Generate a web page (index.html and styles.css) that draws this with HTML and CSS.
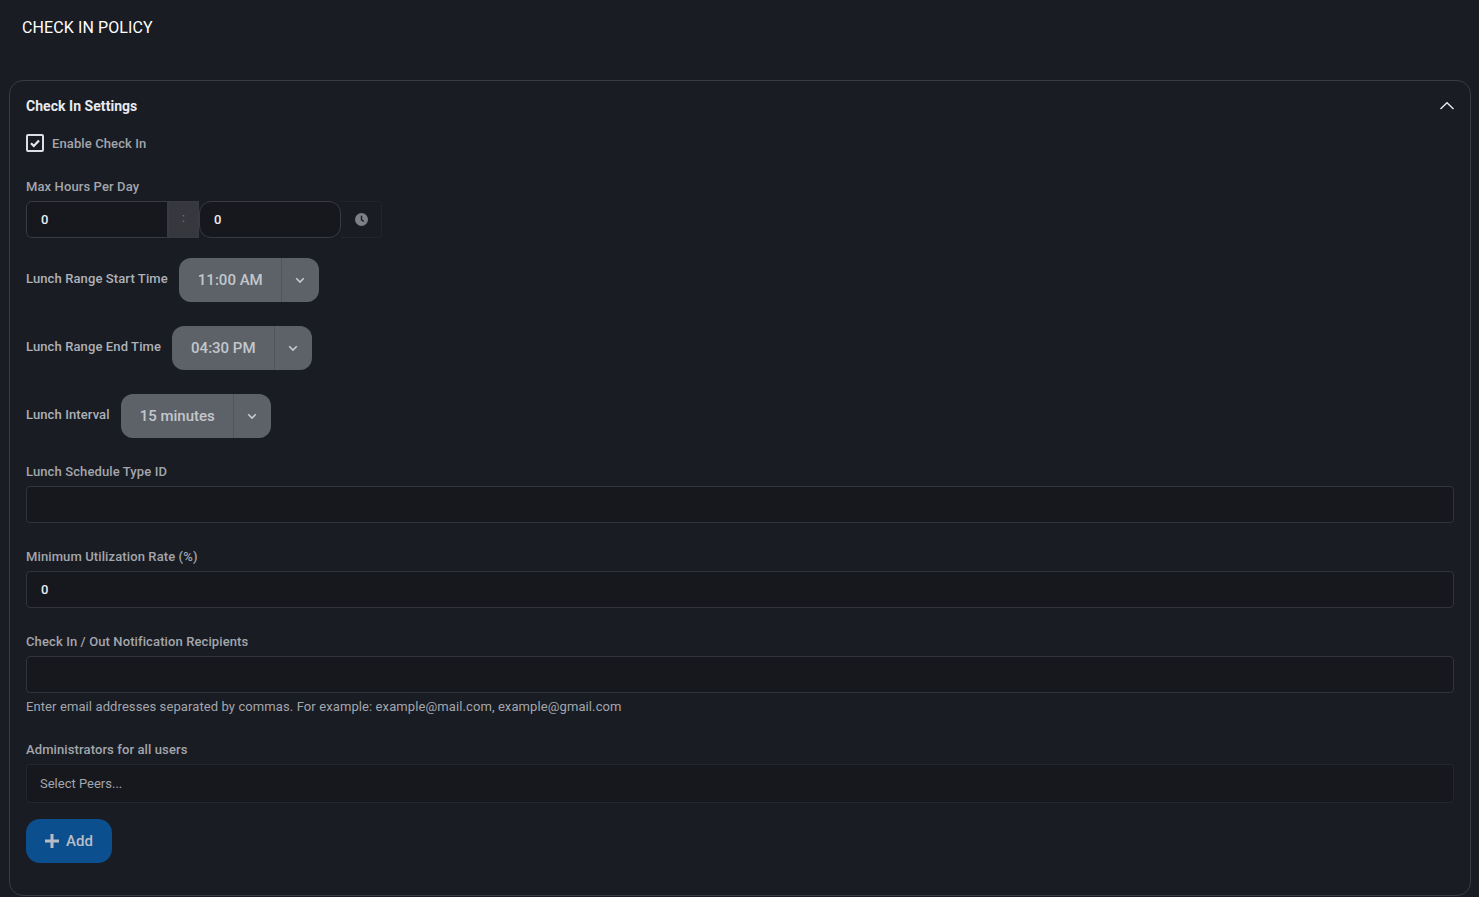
FILE: index.html
```html
<!DOCTYPE html>
<html lang="en">
<head>
<meta charset="utf-8">
<title>Check In Policy</title>
<link rel="stylesheet" href="styles.css">
</head>
<body>
<h1 class="page-title">CHECK IN POLICY</h1>
<section class="card">
  <header class="card-head">
    <h2 class="card-title">Check In Settings</h2>
    <svg class="collapse" viewBox="0 0 16 16" width="16" height="16"><path d="M1.5 11 8 4.7 14.5 11" fill="none" stroke="#e6e9ee" stroke-width="1.4"/></svg>
  </header>
  <label class="check-row">
    <span class="checkbox"><svg viewBox="0 0 12 12" width="12" height="12"><path d="M2 6.2 4.8 9 10 3.4" fill="none" stroke="#e8eaf0" stroke-width="2.2"/></svg></span>
    <span class="label">Enable Check In</span>
  </label>
  <div class="field hours">
    <div class="label">Max Hours Per Day</div>
    <div class="time-group">
      <div class="input left">0</div>
      <div class="sep">:</div>
      <div class="input right">0</div>
      <div class="clock"><svg viewBox="0 0 16 16" width="13" height="13"><circle cx="8" cy="8" r="8" fill="#7d8086"/><path d="M8 3.5V8.4L11 10.4" fill="none" stroke="#1a1d24" stroke-width="1.7"/></svg></div>
    </div>
  </div>
  <div class="inline-field first">
    <span class="label">Lunch Range Start Time</span>
    <div class="select"><span class="select-value">11:00 AM</span><span class="select-arrow"><svg viewBox="0 0 12 12" width="12" height="12"><path d="M2.2 4.2 6 8l3.8-3.8" fill="none" stroke="#c6c9ce" stroke-width="1.6"/></svg></span></div>
  </div>
  <div class="inline-field">
    <span class="label">Lunch Range End Time</span>
    <div class="select"><span class="select-value">04:30 PM</span><span class="select-arrow"><svg viewBox="0 0 12 12" width="12" height="12"><path d="M2.2 4.2 6 8l3.8-3.8" fill="none" stroke="#c6c9ce" stroke-width="1.6"/></svg></span></div>
  </div>
  <div class="inline-field">
    <span class="label">Lunch Interval</span>
    <div class="select"><span class="select-value">15 minutes</span><span class="select-arrow"><svg viewBox="0 0 12 12" width="12" height="12"><path d="M2.2 4.2 6 8l3.8-3.8" fill="none" stroke="#c6c9ce" stroke-width="1.6"/></svg></span></div>
  </div>
  <div class="field block first-block">
    <div class="label">Lunch Schedule Type ID</div>
    <div class="input wide"></div>
  </div>
  <div class="field block">
    <div class="label">Minimum Utilization Rate (%)</div>
    <div class="input wide">0</div>
  </div>
  <div class="field block">
    <div class="label">Check In / Out Notification Recipients</div>
    <div class="input wide"></div>
    <p class="help">Enter email addresses separated by commas. For example: example@mail.com, example@gmail.com</p>
  </div>
  <div class="field admins">
    <div class="label">Administrators for all users</div>
    <div class="peers">Select Peers...</div>
  </div>
  <button class="add" type="button"><svg viewBox="0 0 14 14" width="14" height="14"><path d="M7 0v14M0 7h14" fill="none" stroke="#b9bec6" stroke-width="3"/></svg><span>Add</span></button>
</section>
</body>
</html>
```
FILE: styles.css
```css
* { box-sizing: border-box; }
html, body { margin: 0; height: 897px; overflow: hidden; }
body { background: #191c23; color: #a9acb2; font-family: Roboto, "Liberation Sans", sans-serif; padding: 0 8px 0 9px; }
.page-title { margin: 0; padding: 18px 0 0 13px; height: 80px; font-size: 16px; line-height: 20px; font-weight: 400; letter-spacing: .1px; color: #fff; }
.card { height: 816px; width: 1462px; border: 1px solid #3a3d44; border-radius: 14px; padding: 0 16px; }
.card-head { display: flex; justify-content: space-between; align-items: center; height: 50px; }
.card-head .collapse { margin-right: -1px; margin-top: -1px; }
.card-title { margin: 0; font-size: 14px; line-height: 20px; font-weight: 700; letter-spacing: .04px; color: #e9ebf0; }
.label { font-size: 13px; line-height: 16px; font-weight: 500; letter-spacing: .11px; color: #a3a6ac; }
.check-row { display: flex; align-items: center; gap: 8px; height: 18px; margin-top: 3px; }
.check-row .label { padding-top: 2px; }
.checkbox { width: 18px; height: 18px; border: 2px solid #dcdfe9; border-radius: 2px; display: flex; align-items: center; justify-content: center; }
.hours { margin-top: 27px; }
.hours .label { margin-bottom: 6px; }
.time-group { display: flex; height: 37px; }
.input { background: #16181d; border: 1px solid #383b42; height: 37px; font-size: 13px; font-weight: 500; line-height: 35px; padding-left: 14px; color: #eceef2; }
.input.left { width: 142px; border-radius: 6px 0 0 6px; }
.sep { width: 31px; background: #36383e; border: 1px solid #383b42; color: #74777d; font-size: 12px; line-height: 33px; text-align: center; }
.input.right { width: 142px; border-radius: 12px; }
.clock { width: 41px; border: 1px solid #22252c; border-left: 0; border-radius: 0 4px 4px 0; display: flex; align-items: center; justify-content: center; }
.inline-field { display: flex; align-items: center; gap: 11px; margin-top: 24px; height: 44px; }
.inline-field.first { margin-top: 20px; }
.inline-field .label { position: relative; top: -1px; color: #aeb1b7; }
.select { display: flex; height: 44px; background: #5d6269; border-radius: 12px; overflow: hidden; color: #c3c7cc; }
.select-value { padding: 0 18px 0 19px; font-size: 15px; font-weight: 500; line-height: 44px; white-space: nowrap; }
.select-arrow { width: 38px; padding-right: 1px; border-left: 1px solid #50555c; display: flex; align-items: center; justify-content: center; }
.field.block { height: 85px; padding-top: 1px; }
.block.first-block { margin-top: 25px; }
.block .label { margin-bottom: 6px; }
.input.wide { width: 1428px; border-radius: 4px; border-color: #31343a; }
.help { margin: 6px 0 0; font-size: 13px; line-height: 16px; letter-spacing: .1px; color: #a3a6ac; white-space: nowrap; }
.admins { margin-top: 24px; }
.admins .label { margin-bottom: 6px; }
.peers { width: 1428px; height: 39px; background: #16181d; border: 1px solid #24272d; border-radius: 4px; font-size: 13px; line-height: 37px; padding-left: 13px; color: #a3a6ac; }
.add { margin-top: 16px; width: 86px; height: 44px; background: #0c4f8e; border: 0; border-radius: 14px; display: flex; align-items: center; justify-content: center; gap: 7px; color: #b9bec6; font-family: inherit; font-size: 15px; font-weight: 500; padding: 0; }
```
